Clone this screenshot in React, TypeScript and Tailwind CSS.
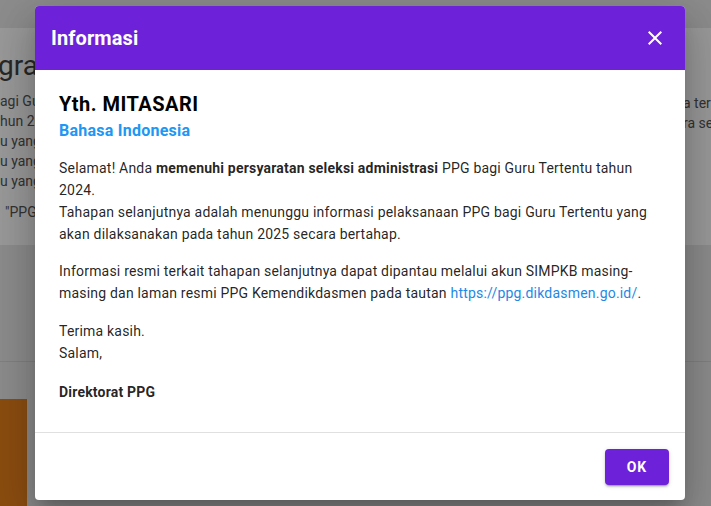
import React from "react";

export default function App() {
  return (
    <div
      className="relative w-[711px] h-[506px] overflow-hidden bg-[#e9e9e9]"
      style={{ fontFamily: "Roboto, 'Liberation Sans', sans-serif" }}
    >
      {/* background page */}
      <div className="flex flex-col h-full">
        <div className="h-[28px]" />
        <div className="bg-white h-[217px] text-[#555] flex">
          <div className="w-[35px] overflow-hidden pt-[18px] text-[14px] leading-[20px]">
            <div className="text-[28px] leading-[40px] text-[#444] whitespace-nowrap -ml-[2px]">grams</div>
            <div className="mt-[5px] whitespace-nowrap">agi Gu</div>
            <div className="whitespace-nowrap">hun 20</div>
            <div className="whitespace-nowrap">u yang</div>
            <div className="whitespace-nowrap">u yang</div>
            <div className="whitespace-nowrap">u yang</div>
            <div className="whitespace-nowrap mt-[11px] pl-[5px]">"PPG</div>
          </div>
          <div className="flex-1" />
          <div className="w-[28px] overflow-hidden pt-[65px] text-[14px] leading-[20px] whitespace-nowrap">
            <div>a ter</div>
            <div>ra se</div>
          </div>
        </div>
        <div className="h-[117px] border-b border-[#d6d6d6]" />
        <div className="h-[37px]" />
        <div className="flex-1 flex">
          <div className="w-[27px] bg-[#e8801b]" />
        </div>
      </div>

      {/* overlay */}
      <div className="absolute inset-0 bg-black/40" />

      {/* dialog */}
      <div className="absolute left-[35px] top-[6px] w-[650px] bg-white rounded-[4px] overflow-hidden shadow-[0_11px_15px_-7px_rgba(0,0,0,0.2),0_24px_38px_3px_rgba(0,0,0,0.14),0_9px_46px_8px_rgba(0,0,0,0.12)]">
        <div className="h-[64px] bg-[#6d22d9] flex items-center justify-between pl-[16px] pr-[18px]">
          <div className="text-white text-[20px] font-bold tracking-[0.1px]">Informasi</div>
          <svg width="24" height="24" viewBox="0 0 24 24" className="text-white">
            <path
              d="M19 6.41 17.59 5 12 10.59 6.41 5 5 6.41 10.59 12 5 17.59 6.41 19 12 13.41 17.59 19 19 17.59 13.41 12z"
              fill="currentColor"
            />
          </svg>
        </div>
        <div className="px-[24px] pt-[19px] pb-[29px] text-[#000000de] text-[14px] leading-[22px] tracking-[0.2px]">
          <div className="text-[20px] leading-[30px] font-bold text-black tracking-[0.5px]">Yth. MITASARI</div>
          <div className="text-[16px] leading-[24px] font-bold text-[#2196f3] tracking-[0.25px]">Bahasa Indonesia</div>
          <p className="mt-[14px] mb-[15px]">
            Selamat! Anda <b>memenuhi persyaratan seleksi administrasi</b> PPG bagi Guru Tertentu tahun
            2024.
            <br />
            Tahapan selanjutnya adalah menunggu informasi pelaksanaan PPG bagi Guru Tertentu yang akan
            dilaksanakan pada tahun 2025 secara bertahap.
          </p>
          <p className="mb-[16px]">
            Informasi resmi terkait tahapan selanjutnya dapat dipantau melalui akun SIMPKB masing-masing
            dan laman resmi PPG Kemendikdasmen pada tautan{" "}
            <a className="text-[#1e88e5]">https://ppg.dikdasmen.go.id/</a>.
          </p>
          <p className="mb-[17px]">
            Terima kasih.
            <br />
            Salam,
          </p>
          <p className="font-bold">Direktorat PPG</p>
        </div>
        <div className="border-t border-[#e0e0e0] flex justify-end px-[16px] pt-[16px] pb-[15px]">
          <button className="w-[64px] h-[36px] rounded-[4px] bg-[#6d22d9] text-white text-[14px] font-bold tracking-[1px] shadow-[0_3px_1px_-2px_rgba(0,0,0,0.2),0_2px_2px_0_rgba(0,0,0,0.14),0_1px_5px_0_rgba(0,0,0,0.12)]">
            OK
          </button>
        </div>
      </div>
    </div>
  );
}
